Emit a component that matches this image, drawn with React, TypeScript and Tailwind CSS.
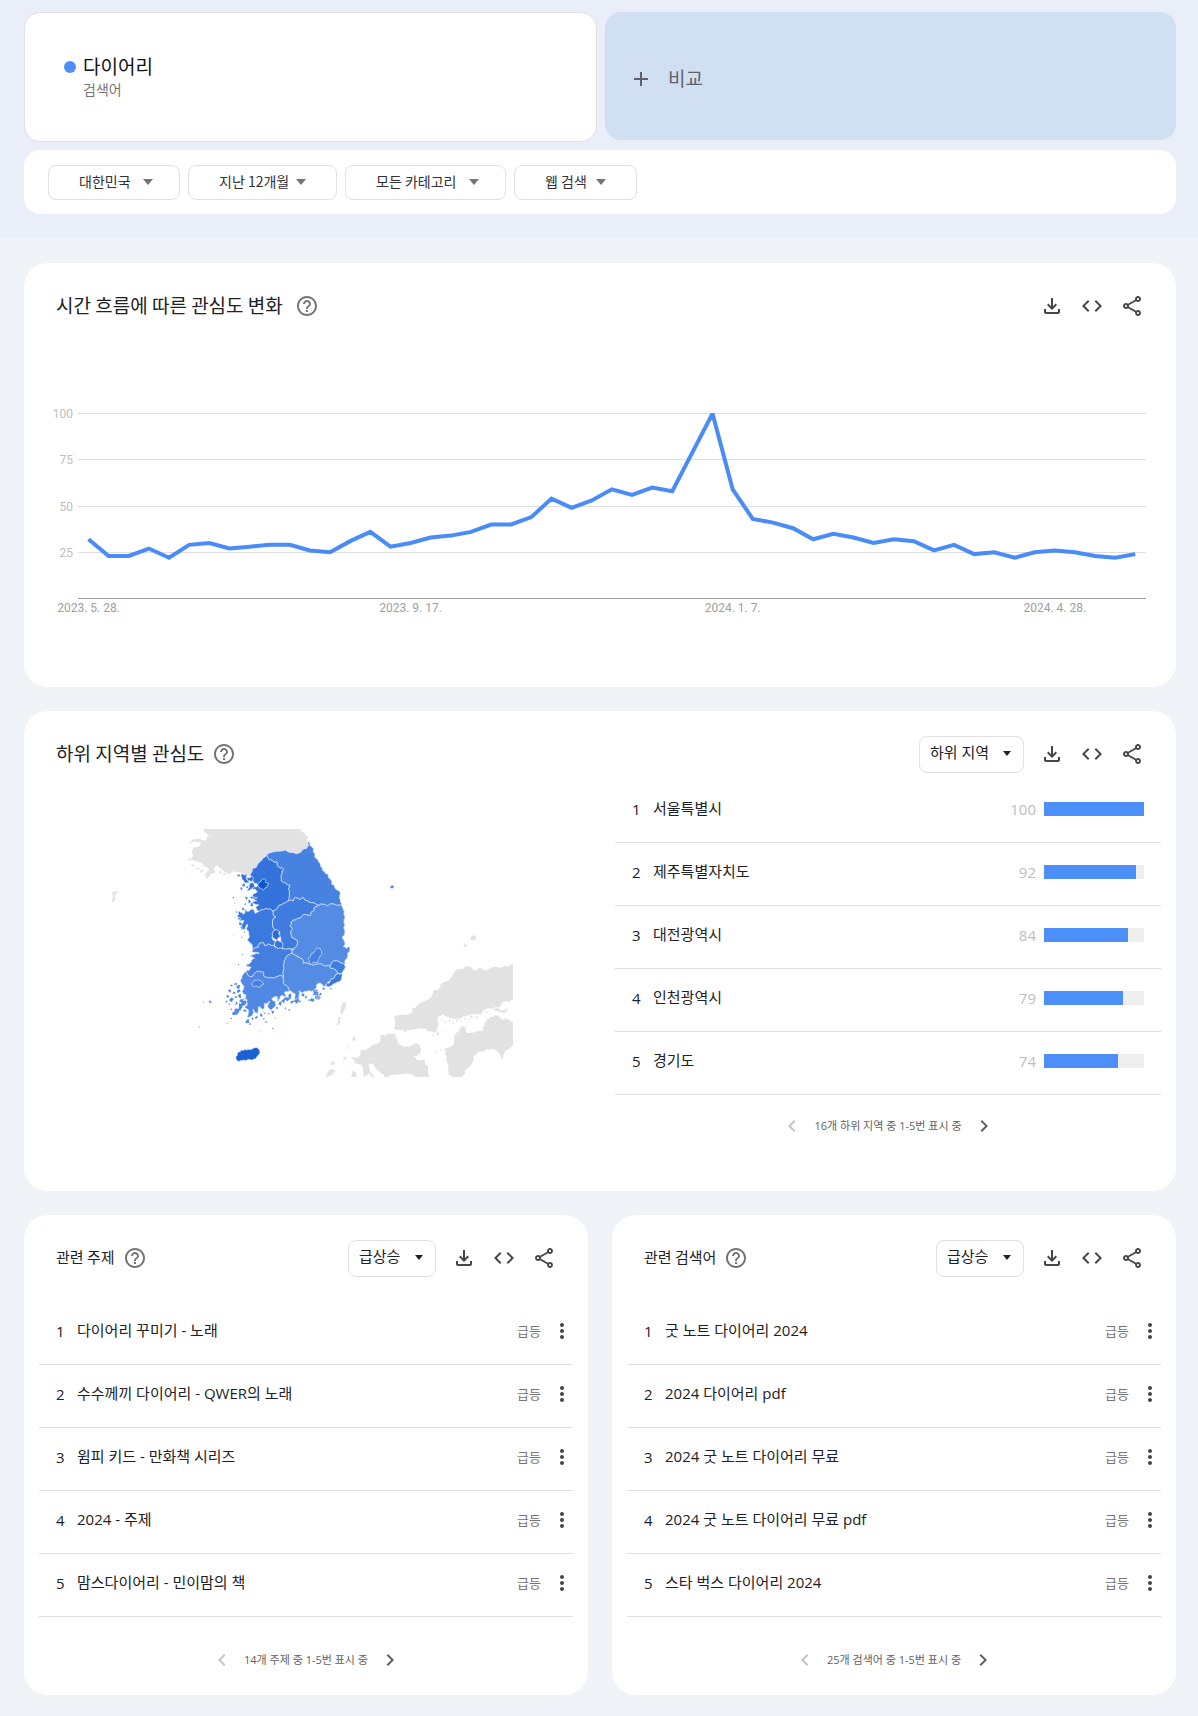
import { ReactNode } from 'react';
import {
    MdAdd,
    MdChevronLeft,
    MdChevronRight,
    MdCode,
    MdHelpOutline,
    MdMoreVert,
    MdOutlineFileDownload,
    MdOutlineShare,
} from 'react-icons/md';

const filters = [
    { label: '지역', value: '대한민국', width: 'w-[132px]', caret: 'right-[27px]' },
    { label: '기간', value: '지난 12개월', width: 'w-[149px]', caret: 'right-[31px]' },
    { label: '카테고리', value: '모든 카테고리', width: 'w-[161px]', caret: 'right-[27px]' },
    { label: '검색 유형', value: '웹 검색', width: 'w-[123px]', caret: 'right-[31px]' },
];

const interest = [
    32, 23, 23, 27, 22, 29, 30, 27, 28, 29, 29, 26, 25, 31, 36, 28, 30, 33, 34, 36, 40, 40, 44, 54, 49, 53, 59,
    56, 60, 58, 79, 100, 59, 43, 41, 38, 32, 35, 33, 30, 32, 31, 26, 29, 24, 25, 22, 25, 26, 25, 23, 22, 24,
];

const dates = [
    { index: 0, text: '2023. 5. 28.' },
    { index: 16, text: '2023. 9. 17.' },
    { index: 32, text: '2024. 1. 7.' },
    { index: 48, text: '2024. 4. 28.' },
];

const regions = [
    { name: '서울특별시', value: 100 },
    { name: '제주특별자치도', value: 92 },
    { name: '대전광역시', value: 84 },
    { name: '인천광역시', value: 79 },
    { name: '경기도', value: 74 },
];

const topics = ['다이어리 꾸미기 - 노래', '수수께끼 다이어리 - QWER의 노래', '윔피 키드 - 만화책 시리즈', '2024 - 주제', '맘스다이어리 - 민이맘의 책'];

const queries = ['굿 노트 다이어리 2024', '2024 다이어리 pdf', '2024 굿 노트 다이어리 무료', '2024 굿 노트 다이어리 무료 pdf', '스타 벅스 다이어리 2024'];

// Map outlines, as "x,y" lists in the map's own units
const neighbours = [
    // North Korea
    '333,80 617,80 640,97 655,112 653,130 650,145 632,157 540,158 530,165 515,180 500,200 488,205 485,228 470,225 440,215 420,222 395,208 382,195 370,205 375,220 355,232 345,222 358,210 335,200 345,193 320,183 292,182 308,170 305,150 325,140 330,125 300,130 330,115 345,122 350,110 370,108 345,98',
    // Honshu
    '1275,490 1250,498 1230,505 1190,512 1152,512 1145,502 1130,498 1115,508 1092,516 1085,530 1060,545 1035,570 1000,605 985,615 960,642 930,645 912,652 910,685 925,690 945,697 960,690 990,685 1020,695 1035,700 1042,685 1042,662 1055,645 1075,650 1090,657 1120,647 1150,643 1180,632 1210,625 1240,605 1275,598',
    // Shikoku
    '1275,670 1250,655 1215,645 1187,665 1180,690 1160,695 1130,698 1120,678 1105,695 1095,705 1092,730 1065,745 1070,770 1075,795 1075,820 1095,835 1115,835 1125,810 1145,790 1150,775 1180,755 1190,747 1220,753 1238,777 1245,753 1275,722',
    // Kyushu
    '870,705 895,700 915,700 922,722 930,735 960,740 975,728 990,735 993,755 970,768 980,780 1005,782 1015,805 1018,838 885,838 870,815 850,790 835,795 840,815 825,830 815,795 795,790 780,770 805,775 810,750 840,745 865,730',
    // Tsushima and the small islands
    '757,612 767,606 765,625 757,642 750,640',
    '742,655 752,652 746,676 738,674',
    '788,710 796,708 796,720 790,724',
    '1140,412 1150,406 1159,414 1154,423 1143,422',
    '1118,437 1126,431 1132,436 1122,442',
    '66,278 86,273 78,282 76,300 66,306',
    '785,812 800,818 798,835 786,835',
    '730,783 736,788 728,796 722,790',
    '715,815 728,808 738,816 722,828 708,832',
    '1205,630 1225,624 1255,626 1250,634 1225,634',
];

const provinces = [
    // Gangwon
    { fill: '#4882e0', points: '655,123 660,135 670,155 685,185 700,213 722,237 735,265 752,300 756,310 740,316 725,312 712,317 700,313 684,316 670,308 655,303 640,293 630,300 616,292 610,303 595,303 597,280 600,255 588,250 573,242 575,215 580,207 562,197 560,185 545,180 530,165 540,158 632,157 650,145 653,130' },
    // Gyeonggi
    { fill: '#3473db', points: '530,165 545,180 560,185 562,197 580,207 575,215 573,242 588,250 600,255 597,280 595,303 570,315 548,333 535,328 518,330 505,335 497,322 507,315 486,306 500,302 478,292 502,293 486,290 490,282 502,275 495,267 476,270 486,258 497,262 503,257 492,248 488,240 488,205 500,200 515,180' },
    // Incheon
    { fill: '#2f6fda', points: '453,223 470,221 468,236 478,250 463,248 455,238' },
    { fill: '#2f6fda', points: '468,232 486,228 487,248 474,243' },
    { fill: '#2f6fda', points: '480,250 490,248 492,262 484,268 470,272 478,262' },
    // Chungnam
    { fill: '#3a79de', points: '505,335 518,330 535,328 548,333 558,350 547,360 548,378 557,390 547,400 545,412 556,425 553,435 535,432 525,437 520,428 508,430 505,442 487,448 482,430 472,420 476,402 469,387 472,372 458,390 462,362 448,366 452,354 432,352 445,345 448,334 462,342 464,326 476,334 488,326 497,340' },
    // Chungbuk
    { fill: '#407cdf', points: '548,333 570,315 595,303 610,303 616,292 630,300 640,293 655,303 670,308 684,316 672,330 660,347 645,343 625,355 605,365 600,378 608,385 605,412 620,420 610,447 607,447 580,447 572,420 570,395 557,390 548,378 547,360 558,350' },
    // Gyeongbuk
    { fill: '#548ce4', points: '684,316 700,313 712,317 725,312 740,316 756,310 760,330 765,355 762,380 757,410 760,440 770,445 776,440 772,470 765,490 750,488 735,483 720,497 700,497 680,493 655,491 640,490 637,478 620,467 607,460 610,447 620,420 605,412 608,385 600,378 605,365 625,355 645,343 660,347 672,330' },
    // Gyeongnam
    { fill: '#548ce4', points: '607,460 620,467 637,478 640,490 655,491 680,493 700,497 720,497 722,505 745,520 720,545 702,562 692,550 682,552 672,568 688,575 690,600 678,585 662,592 668,572 640,577 628,572 626,592 612,602 614,580 598,573 580,545 580,530 582,490 590,470' },
    // Jeonbuk
    { fill: '#447fdf', points: '487,448 505,442 508,430 520,428 525,437 535,432 553,435 565,445 580,447 607,447 607,460 590,470 582,490 580,530 565,528 550,533 527,532 520,518 500,515 487,530 475,527 466,515 483,502 468,493 484,486 494,475 480,468 508,460 485,455' },
    // Jeonnam
    { fill: '#5088e3', points: '466,515 475,527 487,530 500,515 520,518 527,532 550,533 565,528 580,530 580,545 598,573 584,576 592,592 576,586 566,604 560,588 545,596 558,615 545,632 532,618 540,604 524,610 520,638 508,618 502,640 490,628 486,648 472,652 474,628 464,622 472,600 460,598 468,584 456,574 462,560 450,540 458,525' },
    // Seoul, Sejong, Daejeon, Daegu, Gwangju, Ulsan, Busan
    { fill: '#0f57d0', points: '502,253 515,240 525,236 527,248 537,252 531,263 520,270 508,264' },
    { fill: '#2a6bd8', points: '547,400 557,390 568,395 570,412 560,420 545,412' },
    { fill: '#3674dc', points: '556,425 562,418 572,425 580,432 578,445 565,447 553,435' },
    { fill: '#4580e0', points: '658,487 655,475 662,465 672,458 677,448 690,445 695,460 688,472 685,485 672,485 662,493' },
    { fill: '#4781e1', points: '485,550 495,540 512,542 522,552 510,562 490,560' },
    { fill: '#417de0', points: '735,483 750,488 765,490 762,510 750,522 745,520 722,505 720,497' },
    { fill: '#3a78dd', points: '745,520 757,523 742,547 722,558 705,560 720,545' },
    // Jeju
    { fill: '#1a5fd4', points: '437,770 445,757 465,748 495,743 508,748 510,760 500,772 480,778 460,780 445,784 438,778' },
];

// x, y, size
const islets = [
    [446, 226, 5], [462, 254, 6], [455, 266, 5], [472, 262, 5], [430, 294, 3], [434, 310, 2], [470, 295, 5], [478, 305, 6],
    [486, 314, 7], [466, 312, 3], [458, 328, 5], [440, 336, 3], [452, 372, 6], [456, 384, 5], [464, 396, 3], [450, 356, 6],
    [430, 404, 2], [456, 412, 2], [458, 464, 3], [446, 494, 3], [424, 556, 4], [436, 552, 5], [446, 560, 6], [420, 572, 5],
    [432, 578, 5], [444, 574, 7], [412, 590, 5], [424, 598, 8], [438, 592, 6], [450, 588, 9], [454, 602, 11], [440, 610, 6],
    [418, 612, 4], [410, 604, 4], [452, 618, 12], [444, 630, 11], [434, 638, 9], [462, 610, 9], [466, 632, 6], [424, 628, 3],
    [360, 606, 5], [340, 606, 2], [328, 681, 3], [424, 656, 3], [412, 670, 2], [472, 664, 7], [480, 672, 4], [488, 656, 4],
    [500, 652, 5], [512, 644, 6], [524, 640, 4], [536, 640, 3], [548, 638, 5], [522, 656, 3], [528, 666, 3], [556, 654, 2],
    [548, 686, 3], [512, 692, 2], [560, 624, 5], [570, 612, 7], [580, 602, 10], [590, 598, 9], [600, 588, 9], [606, 606, 6],
    [618, 600, 10], [628, 604, 4], [640, 584, 6], [648, 592, 5], [598, 630, 3], [586, 626, 3], [656, 600, 3], [668, 600, 7],
    [682, 592, 11], [676, 578, 9], [692, 582, 5], [700, 566, 5], [722, 566, 3], [510, 750, 2],
];

const greyIslets = [
    [284, 205, 3], [290, 220, 3], [308, 196, 5], [322, 206, 6], [334, 214, 6], [350, 234, 4], [390, 216, 6], [404, 222, 6],
    [416, 232, 3], [300, 128, 4], [66, 328, 2], [934, 596, 1], [1056, 660, 3], [1066, 668, 4], [1078, 662, 4], [1090, 670, 3],
    [1100, 662, 5], [1112, 664, 4], [1124, 656, 5], [1136, 658, 3], [1144, 650, 5], [1160, 652, 4], [1172, 644, 3], [1190, 638, 4],
    [1028, 706, 3], [1044, 700, 6], [1056, 694, 3], [1020, 714, 2], [1040, 756, 3], [1052, 750, 3], [766, 774, 7], [772, 744, 3],
    [840, 820, 7], [846, 828, 6], [760, 786, 3], [732, 822, 3],
];

function noise(seed: number) {
    const value = Math.sin(seed) * 43758.5;
    return value - Math.floor(value);
}

// Splits a coastline edge into wobbling steps. The offset depends only on the two
// end points, so neighbouring provinces get the same border.
function splitEdge(a: number[], b: number[], depth: number): number[][] {
    if (depth === 0 || Math.hypot(b[0] - a[0], b[1] - a[1]) < 5) {
        return [a];
    }
    const [p, q] = a[0] < b[0] || (a[0] === b[0] && a[1] < b[1]) ? [a, b] : [b, a];
    const shift = (noise(p[0] * 12.9 + p[1] * 78.2 + q[0] * 37.7 + q[1] * 11.3) - 0.5) * 0.45;
    const mid = [(p[0] + q[0]) / 2 - (q[1] - p[1]) * shift, (p[1] + q[1]) / 2 + (q[0] - p[0]) * shift];
    return [...splitEdge(a, mid, depth - 1), ...splitEdge(mid, b, depth - 1)];
}

function coast(points: string) {
    const corners = points.split(' ').map((point) => point.split(',').map(Number));
    return corners
        .flatMap((corner, i) => splitEdge(corner, corners[(i + 1) % corners.length], 3))
        .map(([x, y]) => `${x.toFixed(1)},${y.toFixed(1)}`)
        .join(' ');
}

function islet([x, y, size]: number[]) {
    const corners = Array.from({ length: 9 }, (_, i) => {
        const radius = size * (0.3 + noise(x * 3.1 + y * 7.7 + i * 5.3) * 0.9);
        const angle = (i / 9) * Math.PI * 2;
        return `${(x + Math.cos(angle) * radius).toFixed(1)} ${(y + Math.sin(angle) * radius).toFixed(1)}`;
    });
    return `M${corners.join('L')}z`;
}

function RegionMap() {
    return (
        <svg viewBox="66 87 1203 744" className="w-[401px] h-[248px]" role="img" aria-label="하위 지역별 관심도 지도">
            <g fill="#e2e2e2">
                {neighbours.map((points) => (
                    <polygon key={points} points={coast(points)} />
                ))}
                <path d={greyIslets.map(islet).join('')} />
            </g>
            <path d={islets.map(islet).join('')} fill="#5089e4" />
            <g stroke="#dfeafc" strokeWidth="2" strokeLinejoin="round">
                {provinces.map(({ fill, points }) => (
                    <polygon key={points} points={coast(points)} fill={fill} />
                ))}
            </g>
            <path d="M901 259l6-3l5 4l-3 5l-7 0z" fill="#4a86e4" />
        </svg>
    );
}

function TimeChart() {
    const x = (index: number) => 40.5 + index * 20.13;
    const y = (value: number) => 198.5 - value * 1.85;

    return (
        <svg viewBox="0 0 1104 220" className="block w-full" fontFamily="Roboto, sans-serif" fontSize="12">
            <clipPath id="plot">
                <rect x="30" y="13" width="1068" height="186" />
            </clipPath>
            {[100, 75, 50, 25].map((tick) => (
                <g key={tick}>
                    <rect x="30" y={Math.floor(y(tick))} width="1068" height="1" fill="#dedede" />
                    <text x="25" y={Math.floor(y(tick)) + 5} textAnchor="end" fill="#bdbdbd">{tick}</text>
                </g>
            ))}
            <rect x="30" y="198" width="1068" height="1" fill="#9e9e9e" />
            <polyline
                points={interest.map((value, i) => `${x(i)},${y(value)}`).join(' ')}
                fill="none"
                stroke="#4a8cf7"
                strokeWidth="4"
                clipPath="url(#plot)"
            />
            {dates.map(({ index, text }) => (
                <text key={text} x={x(index)} y="212" textAnchor="middle" fill="#9e9e9e">{text}</text>
            ))}
        </svg>
    );
}

function CardHeader({ title, large, option, optionLabel, width }: { title: string; large?: boolean; option?: string; optionLabel?: string; width?: string }) {
    return (
        <div className="flex items-center justify-between px-8 pt-[23px] pb-px">
            <div className="flex items-center h-10 text-[#202124]">
                <h2 className={`pb-[2px] leading-6 font-['Noto_Sans_CJK_KR',sans-serif] ${large ? 'text-[19px]' : 'text-[15px]'}`}>{title}</h2>
                <button type="button" aria-label="도움말" className={`text-[#757575] ${large && !option ? 'ml-3' : 'ml-2'}`}>
                    <MdHelpOutline size={24} />
                </button>
            </div>
            <div className="flex items-center gap-4 text-[#444746]">
                {option && (
                    <div className={`relative h-[37px] ${width}`}>
                        <select aria-label={optionLabel} className="appearance-none w-full h-full pl-[10px] pb-[3px] rounded-lg border border-[#dfe1e5] bg-white text-[15px] text-[#202124]">
                            <option>{option}</option>
                        </select>
                        <svg viewBox="0 0 8 5" className="absolute right-[13px] top-[15px] w-2 h-[5px] pointer-events-none">
                            <path d="M0 0h8L4 5z" fill="#202124" />
                        </svg>
                    </div>
                )}
                <button type="button" aria-label="다운로드"><MdOutlineFileDownload size={24} /></button>
                <button type="button" aria-label="퍼가기"><MdCode size={24} /></button>
                <button type="button" aria-label="공유"><MdOutlineShare size={24} /></button>
            </div>
        </div>
    );
}

function Row({ rank, name, children }: { rank: number; name: string; children: ReactNode }) {
    return (
        <li className="flex items-center h-[63px] pl-[17px] pb-1 border-b border-[#e0e0e0] text-[15px] leading-5 text-[#202124]">
            <span className="w-[21px] shrink-0">{rank}</span>
            <span className="flex-1 pb-[2px]">{name}</span>
            {children}
        </li>
    );
}

function Pager({ text }: { text: string }) {
    return (
        <div className="flex items-center justify-center gap-[10px] text-[11px] leading-4 text-[#616161]">
            <button type="button" aria-label="이전" disabled className="text-[#c4c4c4]"><MdChevronLeft size={24} /></button>
            <span>{text}</span>
            <button type="button" aria-label="다음"><MdChevronRight size={24} /></button>
        </div>
    );
}

function RelatedCard({ title, items, pager }: { title: string; items: string[]; pager: string }) {
    return (
        <section className="bg-white rounded-3xl pb-[23px]">
            <CardHeader title={title} option="급상승" optionLabel={`${title} 정렬`} width="w-[88px]" />
            <ol className="mx-[15px] mt-[23px] mb-[31px]">
                {items.map((item, i) => (
                    <Row key={item} rank={i + 1} name={item}>
                        <span className="text-[13px] text-[#757575]">급등</span>
                        <button type="button" aria-label="더보기" className="ml-[9px] -mr-px text-[#444746]"><MdMoreVert size={24} /></button>
                    </Row>
                ))}
            </ol>
            <Pager text={pager} />
        </section>
    );
}

export default function App() {
    return (
        <div className="min-h-screen bg-[#f0f4f9] font-['Open_Sans','Noto_Sans_CJK_KR',sans-serif]">
            {/* Search terms and filters */}
            <header className="pl-6 pr-[22px] pt-3 pb-6 bg-[#e9eef8]">
                <div className="grid grid-cols-[573fr_571fr] gap-2">
                    <div className="h-[130px] rounded-2xl border border-[#e0e0e0] bg-white pl-[39px] pt-[42px]">
                        <div className="flex items-center gap-[7px]">
                            <span className="w-3 h-3 rounded-full bg-[#4d8ff8]" />
                            <h1 className="text-[19px] leading-6 text-[#111]">다이어리</h1>
                        </div>
                        <p className="pl-[19px] pt-px text-[14px] leading-5 text-[#757575]">검색어</p>
                    </div>
                    <button type="button" className="flex items-center gap-[15px] h-32 pl-6 pt-[6px] rounded-2xl bg-[#d1dff2] text-[19px] text-[#5f6368]">
                        <MdAdd size={24} />
                        비교
                    </button>
                </div>
                <div className="flex items-center gap-2 h-16 mt-2 px-6 rounded-2xl bg-white">
                    {filters.map(({ label, value, width, caret }) => (
                        <div key={label} className={`relative h-[35px] ${width}`}>
                            <select aria-label={label} className="appearance-none w-full h-full pl-[30px] pb-[2px] rounded-lg border border-[#dfe1e5] bg-white font-['Noto_Sans_CJK_KR',sans-serif] text-[14px] text-[#303134]">
                                <option>{value}</option>
                            </select>
                            <svg viewBox="0 0 10 6" className={`absolute top-[14px] w-[10px] h-[6px] pointer-events-none ${caret}`}>
                                <path d="M0 0h10L5 6z" fill="#757575" />
                            </svg>
                        </div>
                    ))}
                </div>
            </header>

            <main className="flex flex-col gap-6 pl-6 pr-[22px] pt-[25px] pb-[21px]">
                {/* Interest over time */}
                <section className="bg-white rounded-3xl">
                    <CardHeader title="시간 흐름에 따른 관심도 변화" large />
                    <div className="px-6 pt-[73px] pb-[67px]">
                        <TimeChart />
                    </div>
                </section>

                {/* Interest by subregion */}
                <section className="bg-white rounded-3xl pb-[53px]">
                    <CardHeader title="하위 지역별 관심도" large option="하위 지역" optionLabel="지역 단위" width="w-[105px]" />
                    <div className="grid grid-cols-2">
                        <div className="flex justify-center pt-[54px]">
                            <RegionMap />
                        </div>
                        <div>
                            <ol className="mx-[15px] mt-[5px] mb-[19px]">
                                {regions.map(({ name, value }, i) => (
                                    <Row key={name} rank={i + 1} name={name}>
                                        <span className="text-[#bdbdbd]">{value}</span>
                                        <div className="w-[100px] h-[14px] ml-2 mr-[17px] bg-[#eee]">
                                            <div className="h-full bg-[#4d8ff8]" style={{ width: `${value}%` }} />
                                        </div>
                                    </Row>
                                ))}
                            </ol>
                            <Pager text="16개 하위 지역 중 1-5번 표시 중" />
                        </div>
                    </div>
                </section>

                {/* Related topics and queries */}
                <div className="grid grid-cols-2 gap-6">
                    <RelatedCard title="관련 주제" items={topics} pager="14개 주제 중 1-5번 표시 중" />
                    <RelatedCard title="관련 검색어" items={queries} pager="25개 검색어 중 1-5번 표시 중" />
                </div>
            </main>
        </div>
    );
}
